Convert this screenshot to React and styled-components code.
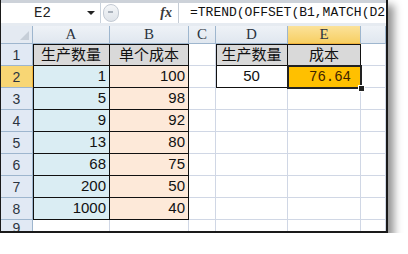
import styled, { createGlobalStyle, css } from 'styled-components';

const GlobalStyle = createGlobalStyle`
  body {
    margin: 0;
    background: #ffffff;
  }
`;

const GRAY = '#d9d9d9';
const BLUE = '#daedf3';
const PEACH = '#fde9d9';
const ORANGE = '#ffc000';

const columns = ['A', 'B', 'C', 'D', 'E', ''];

const rows = [
  [
    { text: '生产数量', bg: GRAY, align: 'center', cjk: true, box: true, left: true, top: true },
    { text: '单个成本', bg: GRAY, align: 'center', cjk: true, box: true, top: true },
    {},
    { text: '生产数量', bg: GRAY, align: 'center', cjk: true, box: true, left: true, top: true },
    { text: '成本', bg: GRAY, align: 'center', cjk: true, box: true, top: true },
    {},
  ],
  [
    { text: '1', bg: BLUE, box: true, left: true },
    { text: '100', bg: PEACH, box: true },
    {},
    { text: '50', align: 'center', box: true, left: true },
    { text: '76.64', bg: ORANGE, mono: true, selected: true },
    {},
  ],
  ...[
    ['5', '98'],
    ['9', '92'],
    ['13', '80'],
    ['68', '75'],
    ['200', '50'],
    ['1000', '40'],
  ].map(([a, b]) => [
    { text: a, bg: BLUE, box: true, left: true },
    { text: b, bg: PEACH, box: true },
    {},
    {},
    {},
    {},
  ]),
  [{}, {}, {}, {}, {}, {}],
];

function Sheet() {
  return (
    <Frame>
      <FormulaBar>
        <NameBox>
          E2
          <Arrow />
        </NameBox>
        <Tools>
          <Grip />
          <Fx>fx</Fx>
        </Tools>
        <Formula>=TREND(OFFSET(B1,MATCH(D2</Formula>
      </FormulaBar>
      <Grid>
        <Corner />
        {columns.map((c) => (
          <ColHead key={c || 'F'} $active={c === 'E'}>{c}</ColHead>
        ))}
        {rows.map((cells, r) => [
          <RowHead key={`h${r}`} $active={r === 1}>{r + 1}</RowHead>,
          ...cells.map((cell, c) => (
            <Cell
              key={`${r}-${c}`}
              $bg={cell.bg}
              $align={cell.align}
              $cjk={cell.cjk}
              $mono={cell.mono}
              $box={cell.box}
              $left={cell.left}
              $top={cell.top}
              $selected={cell.selected}
            >
              {cell.text}
            </Cell>
          )),
        ])}
      </Grid>
    </Frame>
  );
}

export default function App() {
  return (
    <>
      <GlobalStyle />
      <Sheet />
    </>
  );
}

const Frame = styled.div`
  width: 388px;
  height: 233px;
  box-sizing: border-box;
  border-left: 1px solid #1a1a1a;
  border-right: 2px solid #1a1a1a;
  border-bottom: 2px solid #1a1a1a;
  box-shadow: 5px 6px 8px 1px rgba(0, 0, 0, 0.42);
  display: flex;
  flex-direction: column;
  overflow: hidden;
  background: #ffffff;
`;

const FormulaBar = styled.div`
  height: 26px;
  box-sizing: border-box;
  display: flex;
  border-top: 3px solid #cdd2d9;
  border-bottom: 3px solid #e6ebf1;
  background: #ffffff;
`;

const NameBox = styled.div`
  width: 100px;
  flex-shrink: 0;
  box-sizing: border-box;
  position: relative;
  padding-left: 33px;
  border-right: 1px solid #c9d2dc;
  font-family: 'Liberation Mono', monospace;
  font-size: 14px;
  line-height: 20px;
  color: #222;
`;

const Arrow = styled.span`
  position: absolute;
  right: 5px;
  top: 8px;
  border-left: 4px solid transparent;
  border-right: 4px solid transparent;
  border-top: 4px solid #222;
`;

const Tools = styled.div`
  width: 78px;
  flex-shrink: 0;
  box-sizing: border-box;
  display: flex;
  align-items: center;
  justify-content: space-between;
  padding: 0 6px 0 2px;
  border-right: 1px solid #c5ccd5;
`;

const Grip = styled.span`
  width: 16px;
  height: 18px;
  box-sizing: border-box;
  border-radius: 9px;
  border: 1px solid #c3cad3;
  background: linear-gradient(#f4f6f8, #dfe4ea);
  position: relative;

  &::after {
    content: '';
    position: absolute;
    left: 4px;
    top: 6px;
    width: 5px;
    height: 2px;
    background: #a9b1bb;
  }
`;

const Fx = styled.span`
  font-family: 'Liberation Serif', serif;
  font-style: italic;
  font-weight: bold;
  font-size: 14px;
  color: #3a3a3a;
`;

const Formula = styled.div`
  flex: 1;
  min-width: 0;
  padding-left: 11px;
  white-space: nowrap;
  overflow: hidden;
  font-family: 'Liberation Mono', monospace;
  font-size: 13px;
  line-height: 20px;
  color: #111;
`;

const Grid = styled.div`
  flex: 1;
  display: grid;
  grid-template-columns: 32px 77px 79px 27px 72px 73px 1fr;
  grid-template-rows: 18px repeat(8, 22px) 1fr;
`;

const headBase = css`
  box-sizing: border-box;
  display: flex;
  align-items: center;
  justify-content: center;
  color: #2c3440;
  border-right: 1px solid #9eb6ce;
  border-bottom: 1px solid #9eb6ce;
`;

const Corner = styled.div`
  ${headBase};
  background: #e4eaf2;
  position: relative;

  &::after {
    content: '';
    position: absolute;
    right: 3px;
    bottom: 3px;
    border-left: 9px solid transparent;
    border-bottom: 9px solid #c6ced8;
  }
`;

const ColHead = styled.div`
  ${headBase};
  font-family: 'Liberation Serif', serif;
  font-size: 15px;
  background: ${(p) => (p.$active ? 'linear-gradient(#fbe29a, #f7cf63)' : 'linear-gradient(#eef2f7, #e0e7ef)')};
  ${(p) => p.$active && css`
    border-bottom-color: #f1b43c;
  `}
`;

const RowHead = styled.div`
  ${headBase};
  align-items: flex-end;
  padding-bottom: 2px;
  font-family: 'Liberation Sans', Arial, sans-serif;
  font-size: 14px;
  background: ${(p) => (p.$active ? '#f8d674' : '#e1e9f4')};
  ${(p) => p.$active && css`
    border-right-color: #f1b43c;
  `}
`;

const Cell = styled.div`
  box-sizing: border-box;
  position: relative;
  display: flex;
  align-items: flex-end;
  justify-content: ${(p) => (p.$align === 'center' ? 'center' : 'flex-end')};
  padding: 0 3px 2px;
  background: ${(p) => p.$bg || '#ffffff'};
  border-right: 1px solid ${(p) => (p.$box ? '#111' : '#d0d7e5')};
  border-bottom: 1px solid ${(p) => (p.$box ? '#111' : '#d0d7e5')};
  box-shadow: ${(p) => [p.$left && 'inset 1px 0 0 #111', p.$top && 'inset 0 1px 0 #111']
    .filter(Boolean)
    .join(', ') || 'none'};
  font-family: ${(p) => (p.$mono
    ? "'Liberation Mono', monospace"
    : p.$cjk
      ? "'Noto Sans CJK SC', sans-serif"
      : "'Liberation Sans', Arial, sans-serif")};
  font-size: ${(p) => (p.$mono ? '14px' : '15px')};
  line-height: 18px;
  color: ${(p) => (p.$mono ? '#3d2300' : '#111')};
  ${(p) => p.$selected && css`
    z-index: 2;
    padding-right: 10px;
    border: none;
    outline: 2px solid #222;
    outline-offset: -1px;

    &::after {
      content: '';
      position: absolute;
      right: -4px;
      bottom: -4px;
      width: 5px;
      height: 5px;
      background: #222;
      border: 1px solid #fff;
    }
  `}
`;
